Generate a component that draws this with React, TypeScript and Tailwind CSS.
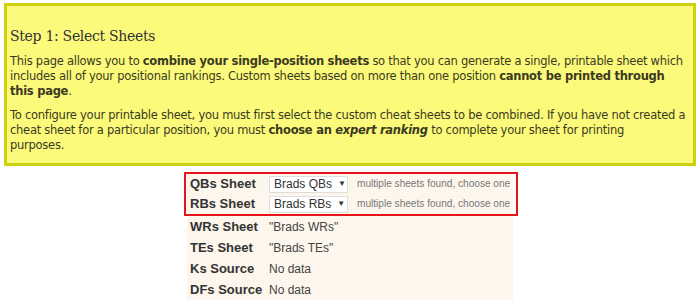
import React from "react";

const Note = () => (
  <span className="ml-[9px] whitespace-nowrap text-[10.1px] text-[#777]">multiple sheets found, choose one</span>
);

const Select = ({ value }: { value: string }) => (
  <span className="inline-flex h-[17px] w-[79px] shrink-0 items-center whitespace-nowrap border border-[#ddd] bg-white pl-[4px] text-[12px] text-[#333]">
    {value}
    <span className="ml-[6px] text-[8px]">▼</span>
  </span>
);

const Row = ({ label, h = "h-[21px]", children }: { label: string; h?: string; children: React.ReactNode }) => (
  <div className={`flex items-center ${h}`}>
    <div className="w-[82px] shrink-0 whitespace-nowrap pl-[3px] text-[13px] font-bold text-[#333]">{label}</div>
    <div className="flex items-center whitespace-nowrap text-[12px] text-[#444]">{children}</div>
  </div>
);

export default function App() {
  return (
    <div className="min-h-screen bg-white font-['Liberation_Sans',Arial,sans-serif] text-[#333]">
      {/* step box */}
      <div className="mx-[4px] mt-[3px] border-[3px] border-[#cdd10f] bg-[#fcfa7a] px-[3px] pb-[10px] pt-[19px] font-['DejaVu_Sans',Verdana,sans-serif] text-[11.5px] leading-[15px] tracking-[-0.26px] text-[#3a3a22]">
        <h2 className="mb-[7px] font-['DejaVu_Serif',serif] text-[14px] leading-[22px] tracking-[-0.3px] text-[#333]">
          Step 1: Select Sheets
        </h2>
        <p className="mb-[9px]">
          This page allows you to <b>combine your single-position sheets</b> so that you can generate a single,
          printable sheet which includes all of your positional rankings. Custom sheets based on more than one
          position <b>cannot be printed through this page</b>.
        </p>
        <p>
          To configure your printable sheet, you must first select the custom cheat sheets to be combined. If you
          have not created a cheat sheet for a particular position, you must{" "}
          <b>
            choose an <i>expert ranking</i>
          </b>{" "}
          to complete your sheet for printing
          <br />
          purposes.
        </p>
      </div>

      {/* sheet table */}
      <div className="mx-auto mt-[6px] w-[326px] bg-[#fdf6ec]">
        <div className="-ml-[3px] -mr-[5px] border-2 border-[#e8141c] pl-px">
          <Row label="QBs Sheet" h="h-[20px]">
            <Select value="Brads QBs" />
            <Note />
          </Row>
          <Row label="RBs Sheet" h="h-[20px]">
            <Select value="Brads RBs" />
            <Note />
          </Row>
        </div>
        <Row label="WRs Sheet">"Brads WRs"</Row>
        <Row label="TEs Sheet">"Brads TEs"</Row>
        <Row label="Ks Source">No data</Row>
        <Row label="DFs Source">No data</Row>
      </div>
    </div>
  );
}
